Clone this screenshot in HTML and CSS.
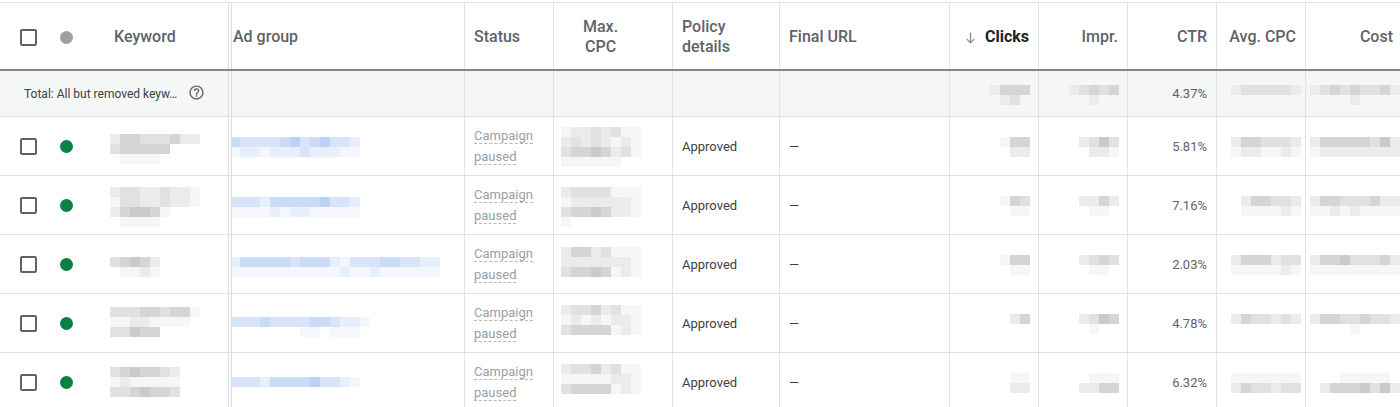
FILE: index.html
```html
<!DOCTYPE html>
<html>
<head>
<meta charset="utf-8">
<link rel="stylesheet" href="styles.css">
</head>
<body>
<div class="table">
  <div class="row head">
    <div class="cell"><span class="cb"></span></div>
    <div class="cell"><span class="dot grey"></span></div>
    <div class="cell kwh">Keyword</div>
    <div class="cell dbl hl">Ad group</div>
    <div class="cell bl hl10">Status</div>
    <div class="cell bl hmax"><span class="two">Max.<br>CPC</span></div>
    <div class="cell bl hl10"><span class="twol">Policy<br>details</span></div>
    <div class="cell bl hl10">Final URL</div>
    <div class="cell bl hr"><svg class="arrow" viewBox="0 0 9 12"><path d="M4.5 0.5V11M0.8 7.2L4.5 11L8.2 7.2"/></svg><span class="sorted">Clicks</span></div>
    <div class="cell bl hr">Impr.</div>
    <div class="cell bl hr">CTR</div>
    <div class="cell bl hr">Avg. CPC</div>
    <div class="cell bl hr hcost">Cost</div>
  </div>

  <div class="row total">
    <div class="cell tot"><span class="ttext">Total: All but removed keyw…</span>
      <svg class="help" viewBox="0 0 24 24"><path d="M11 18h2v-2h-2v2zm1-16C6.48 2 2 6.480 2 12s4.48 10 10 10 10-4.48 10-10S17.52 2 12 2zm0 18c-4.41 0-8-3.59-8-8s3.590-8 8-8 8 3.59 8 8-3.59 8-8 8zm0-14c-2.21 0-4 1.79-4 4h2c0-1.1.9-2 2-2s2 .9 2 2c0 2-3 1.75-3 5h2c0-2.25 3-2.5 3-5 0-2.21-1.79-4-4-4z"/></svg>
    </div>
    <div class="cell dbl"></div>
    <div class="cell bl"></div>
    <div class="cell bl"></div>
    <div class="cell bl"></div>
    <div class="cell bl"></div>
    <div class="cell bl num"><div class="mz t14"><div class="mr"><i class="k1"></i><i class="k3"></i><i class="k3"></i><i class="k3"></i></div><div class="mr"><i></i><i class="k1"></i><i class="k2"></i><i></i></div></div></div>
    <div class="cell bl num"><div class="mz t14"><div class="mr"><i class="k1"></i><i class="k2"></i><i class="k3"></i><i class="k2"></i><i class="k3"></i></div><div class="mr"><i></i><i></i><i class="k1"></i><i></i><i></i></div></div></div>
    <div class="cell bl val">4.37%</div>
    <div class="cell bl avg"><div class="mz t14"><div class="mr"><i class="k1"></i><i class="k2"></i><i class="k2"></i><i class="k2"></i><i class="k2"></i><i class="k2"></i><i class="k1"></i></div><div class="mr"><i class="k0"></i><i></i><i class="k0"></i><i></i><i class="k0"></i><i></i><i></i></div></div></div>
    <div class="cell bl cost"><div class="mz t14"><div class="mr"><i class="k1"></i><i class="k2"></i><i class="k3"></i><i class="k2"></i><i class="k3"></i><i class="k2"></i><i class="k2"></i><i class="k3"></i><i class="k1"></i></div><div class="mr"><i></i><i></i><i class="k0"></i><i></i><i class="k1"></i><i></i><i class="k0"></i><i></i><i></i></div></div></div>
  </div>

  <!-- row 1 -->
  <div class="row data">
    <div class="cell"><span class="cb"></span></div>
    <div class="cell"><span class="dot green"></span></div>
    <div class="cell kw"><div class="mz t17"><div class="mr"><i class="k1"></i><i class="k3"></i><i class="k3"></i><i class="k2"></i><i class="k2"></i><i class="k2"></i><i class="k3"></i><i class="k1"></i><i class="k1"></i></div><div class="mr"><i class="k2"></i><i class="k3"></i><i class="k3"></i><i class="k3"></i><i class="k3"></i><i class="k3"></i></div><div class="mr"><i></i><i class="k0"></i><i class="k0"></i><i class="k0"></i><i class="k0"></i></div></div></div>
    <div class="cell dbl ag"><div class="mz t20"><div class="mr"><i class="b3"></i><i class="b2"></i><i class="b2"></i><i class="b2"></i><i class="b2"></i><i class="b3"></i><i class="b4"></i><i class="b2"></i><i class="b3"></i><i class="b4"></i><i class="b2"></i><i class="b2"></i><i class="b1"></i></div><div class="mr"><i class="b0"></i><i class="b1"></i><i class="b1"></i><i class="b0"></i><i class="b1"></i><i class="b1"></i><i class="b1"></i><i class="b2"></i><i class="b1"></i><i class="b1"></i><i class="b1"></i><i class="b0"></i><i class="b0"></i></div></div></div>
    <div class="cell bl status"><div class="stw"><span class="st">Campaign</span><br><span class="st">paused</span></div></div>
    <div class="cell bl mc"><div class="mz t10"><div class="mr"><i class="k0"></i><i class="k1"></i><i class="k1"></i><i class="k2"></i><i class="k1"></i><i class="k2"></i><i class="k0"></i><i class="k0"></i></div><div class="mr"><i class="k1"></i><i class="k2"></i><i class="k1"></i><i class="k2"></i><i class="k1"></i><i class="k0"></i><i class="k1"></i><i class="k0"></i></div><div class="mr"><i class="k2"></i><i class="k3"></i><i class="k3"></i><i class="k4"></i><i class="k3"></i><i class="k1"></i><i class="k2"></i><i class="k0"></i></div><div class="mr"><i class="k0"></i><i class="k0"></i><i class="k0"></i><i class="k0"></i><i class="k0"></i><i class="k0"></i></div></div></div>
    <div class="cell bl txt">Approved</div>
    <div class="cell bl txt">—</div>
    <div class="cell bl num"><div class="mz t20"><div class="mr"><i class="k0"></i><i class="k3"></i><i class="k3"></i></div><div class="mr"><i></i><i class="k1"></i><i class="k1"></i></div></div></div>
    <div class="cell bl num"><div class="mz t20"><div class="mr"><i class="k1"></i><i class="k2"></i><i class="k4"></i><i class="k2"></i></div><div class="mr"><i></i><i class="k1"></i><i class="k1"></i><i class="k0"></i></div></div></div>
    <div class="cell bl val">5.81%</div>
    <div class="cell bl avg"><div class="mz t20"><div class="mr"><i class="k1"></i><i class="k3"></i><i class="k3"></i><i class="k2"></i><i class="k2"></i><i class="k2"></i><i class="k1"></i></div><div class="mr"><i class="k0"></i><i class="k1"></i><i class="k1"></i><i class="k0"></i><i class="k0"></i><i class="k1"></i><i class="k0"></i></div></div></div>
    <div class="cell bl cost"><div class="mz t20"><div class="mr"><i class="k1"></i><i class="k3"></i><i class="k3"></i><i class="k3"></i><i class="k3"></i><i class="k3"></i><i class="k2"></i><i class="k4"></i><i class="k1"></i></div><div class="mr"><i class="k0"></i><i class="k1"></i><i class="k1"></i><i class="k1"></i><i class="k1"></i><i class="k1"></i><i class="k1"></i><i class="k1"></i><i class="k1"></i></div></div></div>
  </div>

  <!-- row 2 -->
  <div class="row data">
    <div class="cell"><span class="cb"></span></div>
    <div class="cell"><span class="dot green"></span></div>
    <div class="cell kw"><div class="mz t11"><div class="mr"><i class="k1"></i><i class="k2"></i><i class="k2"></i><i class="k1"></i><i class="k1"></i><i class="k2"></i><i class="k1"></i><i class="k1"></i><i class="k0"></i></div><div class="mr"><i class="k0"></i><i class="k2"></i><i class="k2"></i><i class="k1"></i><i class="k1"></i><i class="k2"></i><i class="k1"></i><i class="k1"></i><i class="k0"></i></div><div class="mr"><i class="k1"></i><i class="k3"></i><i class="k4"></i><i class="k4"></i><i class="k3"></i><i class="k0"></i></div><div class="mr"><i></i><i class="k0"></i><i class="k0"></i><i class="k0"></i><i class="k0"></i></div></div></div>
    <div class="cell dbl ag"><div class="mz t21"><div class="mr"><i class="b2"></i><i class="b2"></i><i class="b2"></i><i class="b1"></i><i class="b3"></i><i class="b3"></i><i class="b3"></i><i class="b3"></i><i class="b3"></i><i class="b4"></i><i class="b2"></i><i class="b2"></i><i class="b1"></i></div><div class="mr"><i class="b0"></i><i class="b0"></i><i class="b0"></i><i class="b0"></i><i class="b1"></i><i class="b0"></i><i class="b1"></i><i class="b1"></i><i class="b0"></i><i class="b0"></i><i class="b0"></i><i class="b0"></i><i class="b0"></i></div></div></div>
    <div class="cell bl status"><div class="stw"><span class="st">Campaign</span><br><span class="st">paused</span></div></div>
    <div class="cell bl mc"><div class="mz t11"><div class="mr"><i class="k1"></i><i class="k2"></i><i class="k2"></i><i class="k2"></i><i class="k2"></i><i class="k0"></i><i class="k0"></i><i class="k0"></i></div><div class="mr"><i class="k0"></i><i class="k1"></i><i class="k1"></i><i class="k1"></i><i class="k1"></i><i class="k1"></i><i class="k1"></i><i class="k0"></i></div><div class="mr"><i class="k2"></i><i class="k3"></i><i class="k3"></i><i class="k4"></i><i class="k3"></i><i class="k1"></i><i class="k1"></i><i class="k0"></i></div><div class="mr"><i class="k0"></i></div></div></div>
    <div class="cell bl txt">Approved</div>
    <div class="cell bl txt">—</div>
    <div class="cell bl num"><div class="mz t20"><div class="mr"><i class="k0"></i><i class="k3"></i><i class="k2"></i></div><div class="mr"><i></i><i class="k0"></i><i class="k0"></i></div></div></div>
    <div class="cell bl num"><div class="mz t20"><div class="mr"><i class="k1"></i><i class="k1"></i><i class="k3"></i><i class="k1"></i></div><div class="mr"><i></i><i class="k0"></i><i class="k0"></i><i></i></div></div></div>
    <div class="cell bl val">7.16%</div>
    <div class="cell bl avg"><div class="mz t20"><div class="mr"><i></i><i class="k1"></i><i class="k3"></i><i class="k3"></i><i class="k2"></i><i class="k2"></i><i class="k1"></i></div><div class="mr"><i></i><i class="k0"></i><i class="k0"></i><i class="k0"></i><i class="k0"></i><i class="k1"></i><i class="k0"></i></div></div></div>
    <div class="cell bl cost"><div class="mz t20"><div class="mr"><i class="k1"></i><i class="k3"></i><i class="k3"></i><i class="k2"></i><i class="k2"></i><i class="k2"></i><i class="k3"></i><i class="k1"></i><i class="k1"></i></div><div class="mr"><i class="k0"></i><i class="k0"></i><i class="k1"></i><i class="k0"></i><i class="k1"></i><i class="k0"></i><i class="k0"></i><i class="k0"></i><i class="k0"></i></div></div></div>
  </div>

  <!-- row 3 -->
  <div class="row data">
    <div class="cell"><span class="cb"></span></div>
    <div class="cell"><span class="dot green"></span></div>
    <div class="cell kw"><div class="mz t22"><div class="mr"><i class="k2"></i><i class="k3"></i><i class="k4"></i><i class="k3"></i><i class="k1"></i></div><div class="mr"><i></i><i class="k0"></i><i class="k0"></i><i class="k1"></i><i class="k0"></i></div></div></div>
    <div class="cell dbl ag"><div class="mz t22"><div class="mr"><i class="b1"></i><i class="b3"></i><i class="b3"></i><i class="b3"></i><i class="b3"></i><i class="b3"></i><i class="b2"></i><i class="b3"></i><i class="b3"></i><i class="b3"></i><i class="b1"></i><i class="b0"></i><i class="b2"></i><i class="b2"></i><i class="b2"></i><i class="b3"></i><i class="b3"></i><i class="b2"></i><i class="b2"></i><i class="b1"></i><i class="b1"></i></div><div class="mr"><i class="b0"></i><i class="b0"></i><i class="b0"></i><i class="b0"></i><i class="b0"></i><i class="b0"></i><i class="b0"></i><i class="b0"></i><i class="b0"></i><i class="b0"></i><i class="b0"></i><i class="b1"></i><i class="b0"></i><i class="b0"></i><i class="b1"></i><i class="b0"></i><i class="b0"></i><i class="b0"></i><i class="b0"></i><i class="b0"></i><i class="b0"></i></div></div></div>
    <div class="cell bl status"><div class="stw"><span class="st">Campaign</span><br><span class="st">paused</span></div></div>
    <div class="cell bl mc"><div class="mz t12"><div class="mr"><i class="k1"></i><i class="k3"></i><i class="k3"></i><i class="k1"></i><i class="k2"></i><i class="k0"></i><i class="k0"></i><i class="k0"></i></div><div class="mr"><i class="k1"></i><i class="k1"></i><i class="k1"></i><i class="k1"></i><i class="k1"></i><i class="k1"></i><i class="k1"></i><i class="k0"></i></div><div class="mr"><i class="k2"></i><i class="k3"></i><i class="k3"></i><i class="k4"></i><i class="k3"></i><i class="k0"></i><i class="k1"></i><i class="k0"></i></div></div></div>
    <div class="cell bl txt">Approved</div>
    <div class="cell bl txt">—</div>
    <div class="cell bl num"><div class="mz t20"><div class="mr"><i class="k0"></i><i class="k3"></i><i class="k3"></i></div><div class="mr"><i></i><i class="k0"></i><i class="k0"></i></div></div></div>
    <div class="cell bl num"><div class="mz t20"><div class="mr"><i class="k1"></i><i class="k2"></i><i class="k3"></i><i class="k2"></i></div><div class="mr"><i></i><i class="k0"></i><i class="k0"></i><i></i></div></div></div>
    <div class="cell bl val">2.03%</div>
    <div class="cell bl avg"><div class="mz t20"><div class="mr"><i class="k1"></i><i class="k3"></i><i class="k3"></i><i class="k3"></i><i class="k1"></i><i class="k2"></i><i class="k2"></i></div><div class="mr"><i class="k0"></i><i class="k0"></i><i class="k0"></i><i class="k0"></i><i class="k0"></i><i class="k1"></i><i class="k0"></i></div></div></div>
    <div class="cell bl cost"><div class="mz t20"><div class="mr"><i class="k1"></i><i class="k3"></i><i class="k3"></i><i class="k4"></i><i class="k2"></i><i class="k2"></i><i class="k2"></i><i class="k3"></i><i class="k1"></i></div><div class="mr"><i class="k0"></i><i class="k0"></i><i class="k0"></i><i class="k0"></i><i class="k0"></i><i class="k0"></i><i class="k0"></i><i class="k0"></i><i class="k0"></i></div></div></div>
  </div>

  <!-- row 4 -->
  <div class="row data">
    <div class="cell"><span class="cb"></span></div>
    <div class="cell"><span class="dot green"></span></div>
    <div class="cell kw"><div class="mz t13"><div class="mr"><i class="k2"></i><i class="k2"></i><i class="k2"></i><i class="k3"></i><i class="k3"></i><i class="k2"></i><i class="k3"></i><i class="k3"></i><i class="k0"></i></div><div class="mr"><i class="k0"></i><i class="k0"></i><i class="k1"></i><i class="k1"></i><i class="k0"></i><i class="k0"></i><i class="k0"></i><i class="k0"></i></div><div class="mr"><i class="k2"></i><i class="k2"></i><i class="k4"></i><i class="k3"></i><i class="k3"></i></div></div></div>
    <div class="cell dbl ag"><div class="mz t23"><div class="mr"><i class="b2"></i><i class="b2"></i><i class="b2"></i><i class="b3"></i><i class="b2"></i><i class="b2"></i><i class="b2"></i><i class="b2"></i><i class="b3"></i><i class="b3"></i><i class="b2"></i><i class="b1"></i><i class="b1"></i><i class="b0"></i></div><div class="mr"><i></i><i></i><i></i><i></i><i></i><i></i><i></i><i class="b0"></i><i class="b0"></i><i></i><i class="b0"></i><i class="b0"></i><i class="b0"></i></div></div></div>
    <div class="cell bl status"><div class="stw"><span class="st">Campaign</span><br><span class="st">paused</span></div></div>
    <div class="cell bl mc"><div class="mz t11"><div class="mr"><i class="k1"></i><i class="k2"></i><i class="k2"></i><i class="k3"></i><i class="k1"></i><i class="k2"></i><i class="k0"></i><i class="k0"></i></div><div class="mr"><i class="k0"></i><i class="k1"></i><i class="k0"></i><i class="k1"></i><i class="k0"></i><i class="k1"></i><i class="k1"></i><i class="k0"></i></div><div class="mr"><i class="k2"></i><i class="k3"></i><i class="k3"></i><i class="k3"></i><i class="k3"></i><i class="k0"></i><i class="k1"></i><i class="k0"></i></div></div></div>
    <div class="cell bl txt">Approved</div>
    <div class="cell bl txt">—</div>
    <div class="cell bl num"><div class="mz t20"><div class="mr"><i></i><i class="k1"></i><i class="k3"></i></div><div class="mr"><i></i><i></i><i></i></div></div></div>
    <div class="cell bl num"><div class="mz t20"><div class="mr"><i class="k1"></i><i class="k2"></i><i class="k4"></i><i class="k3"></i></div><div class="mr"><i></i><i class="k0"></i><i></i><i></i></div></div></div>
    <div class="cell bl val">4.78%</div>
    <div class="cell bl avg"><div class="mz t20"><div class="mr"><i class="k1"></i><i class="k3"></i><i class="k2"></i><i class="k2"></i><i class="k1"></i><i class="k2"></i><i class="k1"></i></div><div class="mr"><i></i><i></i><i></i><i></i><i></i><i></i><i></i></div></div></div>
    <div class="cell bl cost"><div class="mz t20"><div class="mr"><i class="k1"></i><i class="k3"></i><i class="k3"></i><i class="k2"></i><i class="k2"></i><i class="k3"></i><i class="k2"></i><i class="k2"></i><i class="k1"></i></div><div class="mr"><i></i><i></i><i></i><i></i><i class="b0"></i><i></i><i></i><i></i><i></i></div></div></div>
  </div>

  <!-- row 5 -->
  <div class="row data">
    <div class="cell"><span class="cb"></span></div>
    <div class="cell"><span class="dot green"></span></div>
    <div class="cell kw"><div class="mz t14"><div class="mr"><i class="k2"></i><i class="k3"></i><i class="k4"></i><i class="k3"></i><i class="k3"></i><i class="k2"></i><i class="k1"></i></div><div class="mr"><i class="k0"></i><i class="k1"></i><i class="k0"></i><i class="k0"></i><i class="k0"></i><i class="k0"></i><i class="k0"></i></div><div class="mr"><i class="k2"></i><i class="k2"></i><i class="k3"></i><i class="k4"></i><i class="k3"></i><i class="k3"></i><i class="k2"></i></div></div></div>
    <div class="cell dbl ag"><div class="mz t24"><div class="mr"><i class="b2"></i><i class="b2"></i><i class="b2"></i><i class="b1"></i><i class="b3"></i><i class="b3"></i><i class="b3"></i><i class="b3"></i><i class="b4"></i><i class="b2"></i><i class="b2"></i><i class="b1"></i><i class="b0"></i></div></div></div>
    <div class="cell bl status"><div class="stw"><span class="st">Campaign</span><br><span class="st">paused</span></div></div>
    <div class="cell bl mc"><div class="mz t11"><div class="mr"><i class="k1"></i><i class="k2"></i><i class="k2"></i><i class="k3"></i><i class="k1"></i><i class="k2"></i><i class="k0"></i><i class="k0"></i></div><div class="mr"><i class="k0"></i><i class="k0"></i><i class="k0"></i><i class="k0"></i><i class="k0"></i><i class="k1"></i><i class="k1"></i><i class="k0"></i></div><div class="mr"><i class="k2"></i><i class="k3"></i><i class="k3"></i><i class="k3"></i><i class="k3"></i><i class="k0"></i><i class="k1"></i><i class="k0"></i></div></div></div>
    <div class="cell bl txt">Approved</div>
    <div class="cell bl txt">—</div>
    <div class="cell bl num"><div class="mz t20"><div class="mr"><i></i><i class="k0"></i><i class="k0"></i></div><div class="mr"><i></i><i class="k1"></i><i class="k1"></i></div></div></div>
    <div class="cell bl num"><div class="mz t20"><div class="mr"><i></i><i class="k0"></i><i class="k0"></i><i class="k0"></i></div><div class="mr"><i class="k1"></i><i class="k1"></i><i class="k3"></i><i class="k3"></i></div></div></div>
    <div class="cell bl val">6.32%</div>
    <div class="cell bl avg"><div class="mz t20"><div class="mr"><i class="k0"></i><i class="k0"></i><i class="k0"></i><i class="k0"></i><i class="k0"></i><i class="k0"></i><i class="k0"></i></div><div class="mr"><i class="k1"></i><i class="k3"></i><i class="k2"></i><i class="k2"></i><i class="k1"></i><i class="k2"></i><i class="k2"></i></div></div></div>
    <div class="cell bl cost"><div class="mz t20"><div class="mr"><i></i><i></i><i></i><i class="k0"></i><i class="k0"></i><i class="k0"></i><i class="k0"></i><i class="k0"></i><i></i></div><div class="mr"><i></i><i class="k1"></i><i class="k3"></i><i class="k3"></i><i class="k3"></i><i class="k4"></i><i class="k2"></i><i class="k4"></i><i class="k1"></i></div></div></div>
  </div>
</div>
</body>
</html>
```

FILE: styles.css
```css
* { box-sizing: border-box; }
html, body { margin: 0; padding: 0; background: #fff; }
body {
  font-family: Roboto, "Liberation Sans", Arial, sans-serif;
  color: #3c4043;
  overflow: hidden;
}
.table {
  width: 1400px;
  margin-top: 2px;
  border-top: 1px solid #e3e3e3;
}
.row {
  display: grid;
  grid-template-columns: 44px 44px 140px 236px 89px 119px 107px 170px 89px 89px 89px 89px 95px;
}
.cell {
  display: flex;
  align-items: center;
  min-width: 0;
  overflow: hidden;
}
.bl { border-left: 1px solid #e3e3e3; }
.dbl { border-left: 4px double #dcdcdc; }

/* header */
.head { height: 68px; border-bottom: 2px solid #80868b; }
.head .cell {
  font-size: 16px;
  font-weight: 500;
  color: #5f6368;
  line-height: 20px;
  padding-top: 2px;
}
.kwh { padding-left: 26px; }
.hl { padding-left: 1px; }
.hl10 { padding-left: 9px; }
.hmax { padding-left: 29px; }
.two { display: inline-block; text-align: center; }
.twol { display: inline-block; }
.hr { justify-content: flex-end; padding-right: 9px; white-space: nowrap; }
.hcost { padding-right: 7px; }
.arrow {
  width: 9px;
  height: 12px;
  fill: none;
  stroke: #80868b;
  stroke-width: 1.2;
  margin-right: 10px;
  margin-top: 1px;
  flex: none;
}
.sorted { color: #202124; font-weight: 700; }

.cb {
  display: inline-block;
  width: 17px;
  height: 17px;
  border: 2px solid #5f6368;
  border-radius: 2px;
  margin-left: 20px;
}
.dot {
  display: inline-block;
  width: 13px;
  height: 13px;
  border-radius: 50%;
  margin-left: 16px;
}
.dot.grey { background: #a0a0a0; }
.dot.green { background: #0b8043; }

/* total */
.total { height: 46px; background: #f5f7f6; border-bottom: 1px solid #e0e0e0; }
.tot { grid-column: 1 / 4; padding-left: 24px; }
.ttext { font-size: 12px; color: #3c4043; white-space: nowrap; }
.help { width: 17px; height: 17px; fill: #5f6368; margin-left: 11px; margin-top: -3px; flex: none; }

/* data rows */
.data { height: 59px; border-bottom: 1px solid #e0e0e0; }
.txt { font-size: 13px; padding-left: 9px; color: #3c4043; }
.val { font-size: 13px; justify-content: flex-end; padding-right: 9px; color: #5f6368; }
.status { padding-left: 9px; }
.stw { font-size: 13px; line-height: 21px; color: #9aa0a6; }
.st { border-bottom: 1px dashed #b4b8bc; }

/* pixelated (blurred) content */
.kw, .ag, .mc, .num, .avg, .cost { align-items: flex-start; }
.kw { padding-left: 22px; }
.mc { padding-left: 7px; }
.num { justify-content: flex-end; padding-right: 8px; }
.avg { padding-left: 14px; }
.cost { padding-left: 4px; }
.mz { display: flex; flex-direction: column; }
.mr { display: flex; height: 10px; }
.mr i { display: block; width: 10px; height: 10px; flex: none; }
.k0 { background: #f6f6f6; }
.k1 { background: #ebebeb; }
.k2 { background: #e1e1e1; }
.k3 { background: #d5d5d5; }
.k4 { background: #cacaca; }
.b0 { background: #f4f7fd; }
.b1 { background: #e7effc; }
.b2 { background: #d8e5f9; }
.b3 { background: #c9dbf6; }
.b4 { background: #bcd2f4; }
.t10 { margin-top: 10px; }
.t11 { margin-top: 11px; }
.t12 { margin-top: 12px; }
.t13 { margin-top: 13px; }
.t14 { margin-top: 14px; }
.t17 { margin-top: 17px; }
.t20 { margin-top: 20px; }
.t21 { margin-top: 21px; }
.t22 { margin-top: 22px; }
.t23 { margin-top: 23px; }
.t24 { margin-top: 24px; }
.ag .mz { margin-left: -2px; }
```
